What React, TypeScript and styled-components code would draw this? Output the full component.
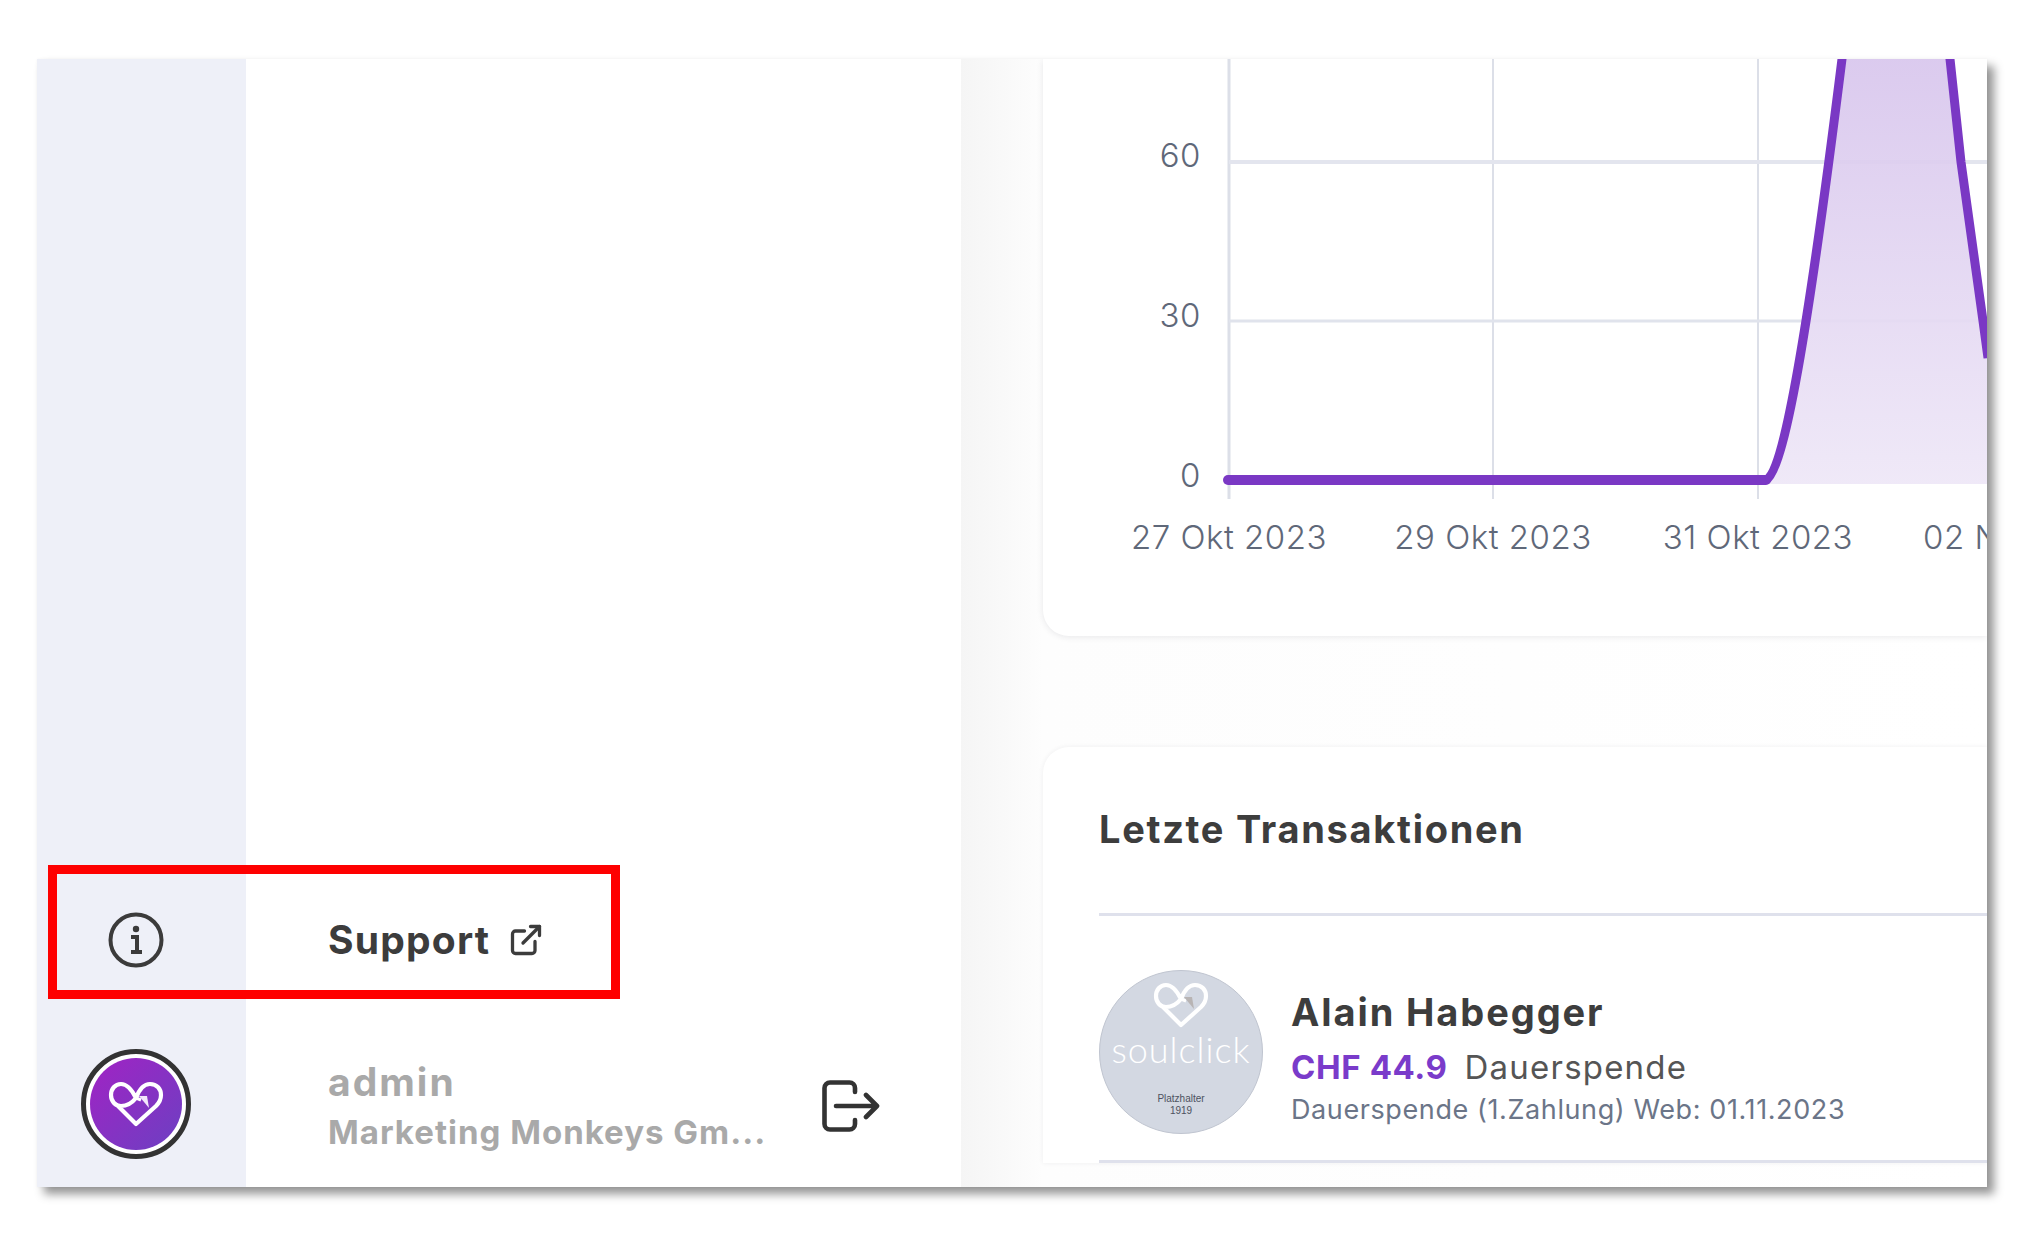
import { FC } from 'react';
import styled, { createGlobalStyle } from 'styled-components';
import { ExternalLink } from 'lucide-react';

const GlobalStyle = createGlobalStyle`
  html, body {
    margin: 0;
    padding: 0;
    background: #fff;
    font-family: "Inter", "Liberation Sans", sans-serif;
  }
`;

const Page = styled.div`
  width: 2040px;
  height: 1246px;
  padding: 59px 0 0 37px;
  box-sizing: border-box;
  background: #fff;
  overflow: hidden;
`;

const Frame = styled.div`
  position: relative;
  display: flex;
  width: 1950px;
  height: 1128px;
  background: #fff;
  box-shadow: 7px 7px 9px rgba(0, 0, 0, .42), 0 0 3px rgba(0, 0, 0, .04);
`;

const Highlight = styled.div`
  position: absolute;
  left: 11px;
  top: 806px;
  width: 572px;
  height: 134px;
  border: 9px solid #fe0000;
  box-sizing: border-box;
  pointer-events: none;
`;

const Rail = styled.aside`
  flex: 0 0 209px;
  display: flex;
  flex-direction: column;
  justify-content: flex-end;
  align-items: center;
  padding: 0 11px 28px 0;
  box-sizing: border-box;
  background: #eef0f8;
`;

const InfoSlot = styled.div`
  display: flex;
  margin-bottom: 81px;
  color: #3b3b3b;
`;

const Badge = styled.div`
  display: flex;
  align-items: center;
  justify-content: center;
  width: 110px;
  height: 110px;
  box-sizing: border-box;
  border-radius: 50%;
  border: 5px solid #333;
  padding: 4px;
  background: #fff;
`;

const BadgeInner = styled.div`
  display: flex;
  align-items: center;
  justify-content: center;
  width: 100%;
  height: 100%;
  border-radius: 50%;
  background: linear-gradient(135deg, #a123c4, #6c40c2);
`;

const Panel = styled.nav`
  flex: 0 0 715px;
  display: flex;
  flex-direction: column;
  justify-content: flex-end;
  padding: 0 0 36px 82px;
  box-sizing: border-box;
  background: #fff;
`;

const SupportLink = styled.div`
  display: flex;
  align-items: center;
  gap: 18px;
  margin-bottom: 97px;
  font-size: 39px;
  letter-spacing: 1.2px;
  font-weight: 700;
  color: #3c3c3c;
`;

const UserRow = styled.div`
  display: flex;
  align-items: center;
  justify-content: space-between;
  padding-right: 81px;
`;

const UserText = styled.div`
  display: flex;
  flex-direction: column;
  gap: 9px;
  color: #a9a9a9;
  font-weight: 700;
`;

const UserName = styled.div`
  font-size: 39px;
  line-height: 44px;
  letter-spacing: 2px;
`;

const UserCompany = styled.div`
  font-size: 33px;
  line-height: 38px;
  letter-spacing: 1px;
`;

const Main = styled.main`
  flex: 1;
  min-width: 0;
  padding-left: 82px;
  overflow: hidden;
  background: linear-gradient(90deg, #f5f5f5 0, #fdfdfd 82px, #fff 100%);
`;

const ChartCard = styled.section`
  height: 577px;
  background: #fff;
  border-radius: 0 0 0 26px;
  box-shadow: 0 1px 6px rgba(40, 40, 60, .1);
`;

const ChartSvg = styled.svg`
  display: block;
  font-family: "Inter", "Liberation Sans", sans-serif;
`;

const ListCard = styled.section`
  margin-top: 111px;
  padding: 0 0 0 56px;
  background: #fff;
  border-radius: 26px 0 0 0;
  box-shadow: 0 0 5px rgba(40, 40, 60, .07);
`;

const ListTitle = styled.h2`
  margin: 0;
  height: 169px;
  padding-top: 59px;
  box-sizing: border-box;
  font-size: 38px;
  line-height: 46px;
  letter-spacing: 1.7px;
  font-weight: 700;
  color: #3d3d3d;
  border-bottom: 3px solid #dfe1ec;
`;

const TxRow = styled.div`
  display: flex;
  align-items: flex-start;
  gap: 28px;
  height: 247px;
  padding-top: 54px;
  box-sizing: border-box;
  border-bottom: 3px solid #dfe1ec;
`;

const Thumb = styled.div`
  flex: 0 0 164px;
  height: 164px;
  display: flex;
  flex-direction: column;
  align-items: center;
  padding-top: 11px;
  box-sizing: border-box;
  border-radius: 50%;
  background: #d3d8e2;
  border: 1px solid #c0c5d0;
  color: #fff;
`;

const ThumbBrand = styled.div`
  font-family: "Lato", sans-serif;
  font-size: 36px;
  line-height: 40px;
  font-weight: 300;
  letter-spacing: 1px;
  margin-top: 1px;
`;

const ThumbNote = styled.div`
  margin-top: 24px;
  font-family: "Liberation Sans", sans-serif;
  font-size: 10px;
  line-height: 12px;
  text-align: center;
  color: #4d5260;
`;

const TxText = styled.div`
  display: flex;
  flex-direction: column;
  padding-top: 20px;
`;

const TxName = styled.div`
  font-size: 38px;
  line-height: 44px;
  letter-spacing: 1.9px;
  font-weight: 700;
  color: #3d3d3d;
`;

const TxLine = styled.div`
  display: flex;
  align-items: baseline;
  gap: 17px;
  margin-top: 14px;
  line-height: 38px;
`;

const TxAmount = styled.span`
  font-size: 33px;
  letter-spacing: .6px;
  font-weight: 700;
  color: #7a3bca;
`;

const TxKind = styled.span`
  font-size: 33px;
  letter-spacing: 1.2px;
  font-weight: 400;
  color: #555;
`;

const TxMeta = styled.div`
  margin-top: 8px;
  font-size: 27px;
  line-height: 32px;
  letter-spacing: .6px;
  font-weight: 400;
  color: #6b7588;
`;

const HeartLogo: FC<{ width: number; color: string; arrow: string }> = ({ width, color, arrow }) => (
  <svg width={width} height={width * 46 / 56} viewBox="0 0 56 46" fill="none">
    <path
      d="M28 17 C24 9 19 3 13 3 C7 3 3 8 3 14 C3 20 7 25 13 25 C19 25 24 22 28 17 C31 9 36 3 42 3 C49 3 53 8 53 14 C53 19 51 22 48 25 L28 43 L9 24"
      stroke={color}
      strokeWidth="4.2"
      strokeLinecap="round"
      strokeLinejoin="round"
    />
    <path d="M28 17 L33 19" stroke={color} strokeWidth="3" />
    <path d="M31 15 L41 27 L39 15 Z" fill={arrow} />
  </svg>
);

const InfoIcon: FC = () => (
  <svg width="56" height="56" viewBox="0 0 56 56" fill="none" stroke="currentColor">
    <circle cx="28" cy="28" r="25.5" strokeWidth="4" />
    <circle cx="28" cy="17" r="3.2" fill="currentColor" stroke="none" />
    <path d="M23 25 H29 V39 M23 40 H34" strokeWidth="4" />
  </svg>
);

const LogoutIcon: FC = () => (
  <svg width="58" height="52" viewBox="0 0 58 52" fill="none" stroke="#333" strokeWidth="4.6" strokeLinecap="round" strokeLinejoin="round">
    <path d="M33 12 V8 a5.5 5.5 0 0 0 -5.5 -5.5 H8 a5.5 5.5 0 0 0 -5.5 5.5 V44 a5.5 5.5 0 0 0 5.5 5.5 H27.5 a5.5 5.5 0 0 0 5.5 -5.5 V40" />
    <path d="M14 26 H54 M44 15 L55 26 L44 37" />
  </svg>
);

const xLabels = [
  { x: 1229, text: '27 Okt 2023', anchor: 'middle' },
  { x: 1493, text: '29 Okt 2023', anchor: 'middle' },
  { x: 1758, text: '31 Okt 2023', anchor: 'middle' },
  { x: 1923, text: '02 Nov 2023', anchor: 'start' },
];

const yLabels = [
  { y: 155, text: '60' },
  { y: 315, text: '30' },
  { y: 475, text: '0' },
];

const curve = 'M1766 480 C1786 470 1812 300 1842 59 L1846 20 L1946 20 L1950 59 L1961 162 L1983 321 L1988 358';

const SalesChart: FC = () => (
  <ChartSvg width="944" height="577" viewBox="1043 59 944 577">
    <defs>
      <linearGradient id="areaFill" x1="0" y1="0" x2="0" y2="1">
        <stop offset="0" stopColor="#d6c3ec" />
        <stop offset="1" stopColor="#eee7f7" />
      </linearGradient>
    </defs>
    {[1229, 1493, 1758].map((x, i) => (
      <line key={x} x1={x} x2={x} y1="59" y2="499" stroke="#dcdfe8" strokeWidth={i === 0 ? 3 : 2} />
    ))}
    <line x1="1229" x2="1987" y1="162" y2="162" stroke="#e3e5ee" strokeWidth="4" />
    <line x1="1229" x2="1987" y1="321" y2="321" stroke="#e0e3ec" strokeWidth="3" />
    <path d={`${curve} L1990 484 L1766 484 Z`} fill="url(#areaFill)" fillOpacity=".92" />
    <path d="M1228 480 H1766" stroke="#7a38c4" strokeWidth="10" strokeLinecap="round" />
    <path d={curve} stroke="#7a38c4" strokeWidth="9" fill="none" />
    {yLabels.map(l => (
      <text key={l.text} x="1201" y={l.y + 12} textAnchor="end" fontSize="33" fontWeight="300" letterSpacing=".5" fill="#5f6879">{l.text}</text>
    ))}
    {xLabels.map(l => (
      <text key={l.text} x={l.x} y="549" textAnchor={l.anchor as 'middle' | 'start'} fontSize="33" fontWeight="300" letterSpacing=".5" fill="#5f6879">{l.text}</text>
    ))}
  </ChartSvg>
);

export default function App() {
  return (
    <Page>
      <GlobalStyle />
      <Frame>
        <Rail>
          <InfoSlot><InfoIcon /></InfoSlot>
          <Badge>
            <BadgeInner>
              <HeartLogo width={56} color="#fff" arrow="#f3e6fb" />
            </BadgeInner>
          </Badge>
        </Rail>
        <Panel>
          <SupportLink>
            Support
            <ExternalLink size={36} strokeWidth={2.2} />
          </SupportLink>
          <UserRow>
            <UserText>
              <UserName>admin</UserName>
              <UserCompany>Marketing Monkeys Gm...</UserCompany>
            </UserText>
            <LogoutIcon />
          </UserRow>
        </Panel>
        <Main>
          <ChartCard>
            <SalesChart />
          </ChartCard>
          <ListCard>
            <ListTitle>Letzte Transaktionen</ListTitle>
            <TxRow>
              <Thumb>
                <HeartLogo width={56} color="#fff" arrow="#b8b4b4" />
                <ThumbBrand>soulclick</ThumbBrand>
                <ThumbNote>Platzhalter<br />1919</ThumbNote>
              </Thumb>
              <TxText>
                <TxName>Alain Habegger</TxName>
                <TxLine>
                  <TxAmount>CHF 44.9</TxAmount>
                  <TxKind>Dauerspende</TxKind>
                </TxLine>
                <TxMeta>Dauerspende (1.Zahlung) Web: 01.11.2023</TxMeta>
              </TxText>
            </TxRow>
          </ListCard>
        </Main>
        <Highlight />
      </Frame>
    </Page>
  );
}
